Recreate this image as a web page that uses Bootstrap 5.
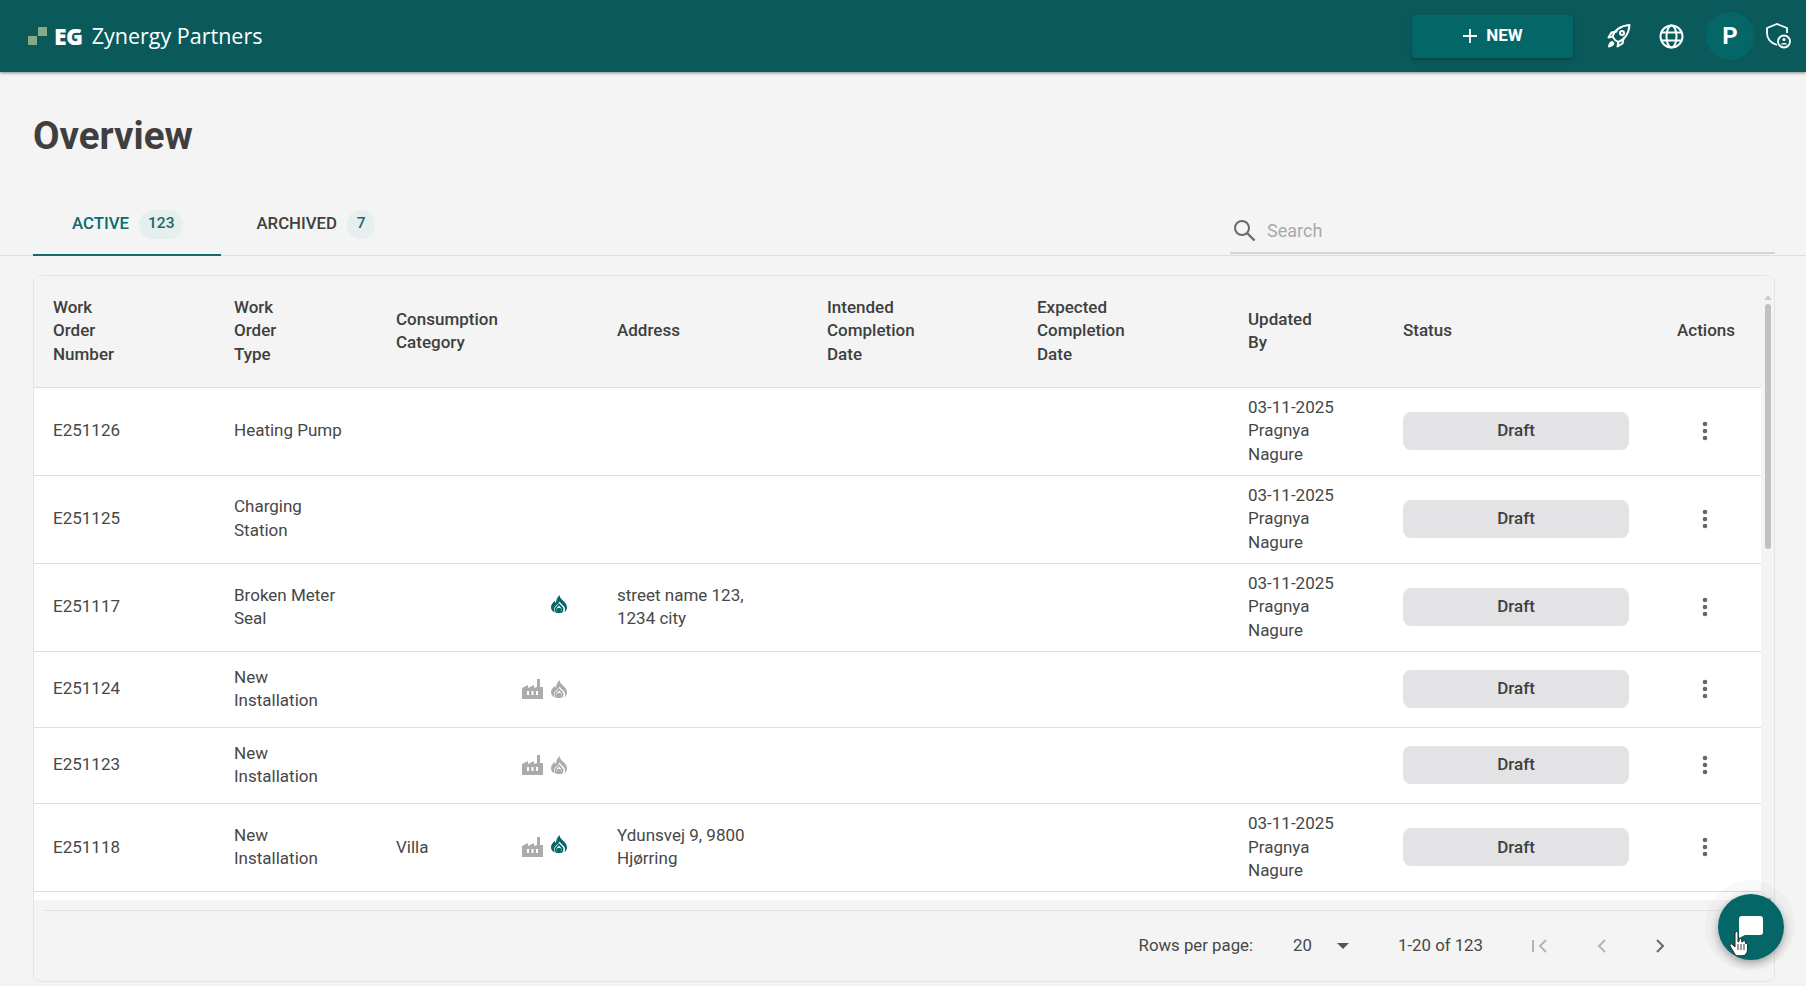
<!DOCTYPE html>
<html lang="en">
<head>
<meta charset="UTF-8">
<title>Overview</title>
<link rel="stylesheet" href="https://cdn.jsdelivr.net/npm/bootstrap@5.3.0/dist/css/bootstrap.min.css">
<style>
    html, body { height: 986px; overflow: hidden; }
    body { background: #f4f4f4; font-family: Roboto, "Liberation Sans", sans-serif; font-size: 17px; color: #474747; }
    .topbar { height: 72px; background: #0a5a5c; box-shadow: 0 1px 3px rgba(0,0,0,.45); padding: 0 15px 0 28px; position: relative; }
    .logo-mark { width: 19px; height: 18px; position: relative; margin-right: 7px; }
    .logo-mark i { position: absolute; display: block; width: 9px; height: 9px; }
    .logo-mark i:first-child { left: 0; bottom: 0; background: #86aa86; }
    .logo-mark i:last-child { right: 0; top: 0; background: #86aa86; }
    .logo-eg { font-family: "Open Sans", sans-serif; font-weight: 800; font-size: 23px; color: #fff; letter-spacing: -.5px; margin-right: 9px; line-height: 1; }
    .logo-name { font-family: "Open Sans", sans-serif; font-size: 21.5px; color: #fff; line-height: 1; }
    .new-btn { width: 161px; height: 43px; background: #056668; color: #fff; font-weight: 700; font-size: 17px; border: 0; border-radius: 4px; box-shadow: 0 2px 4px rgba(0,0,0,.25); margin-right: 20px; }
    .top-ico { width: 52px; color: #fff; }
    .avatar-dot { width: 48px; height: 48px; border-radius: 50%; background: #056668; color: #fff; font-size: 24px; font-weight: 700; margin: 0 11px 0 9px; }
    .page-title { font-size: 38.5px; font-weight: 700; color: #3f3f3f; margin: 0; padding: 41px 0 0 33px; line-height: 45px; height: 122px; }
    .tab-row { height: 62px; border-bottom: 1px solid #dedede; padding: 0 31px 0 33px; }
    .tab-item { height: 62px; font-size: 16.8px; font-weight: 500; color: #3f3f3f; border-bottom: 2px solid transparent; margin-bottom: -1px; }
    .tab-on { color: #0a6b6e; border-bottom-color: #12696b; padding: 0 38px 0 39px; }
    .tab-off { padding-left: 35px; }
    .tab-count { height: 29px; min-width: 28px; padding: 0 9px; border-radius: 15px; background: #e6eeee; color: #1c6a6c; font-size: 15.5px; margin-left: 10px; }
    .search-box { width: 545px; height: 45px; border-bottom: 2px solid #d5d5d5; margin-bottom: 1px; padding-left: 3px; }
    .search-box input { border: 0; background: transparent; outline: 0; font-size: 18px; width: 480px; margin-left: 9px; color: #474747; }
    .search-box input::placeholder { color: #a9a9a9; }
    .grid-card { margin: 19px 31px 0 33px; height: 707px; background: #f4f4f4; border: 1px solid #e5e5e5; border-radius: 8px; overflow: hidden; }
    .grid-scroll { height: 624px; }
    .grid-pane { width: 1727px; height: 624px; overflow: hidden; background: #fff; }
    .wo-table { table-layout: fixed; width: 1727px; margin: 0; color: #474747; }
    .wo-table th { background: #f4f4f4; height: 111px; font-weight: 500; color: #3f3f3f; padding: 0 0 0 19px; line-height: 23.7px; vertical-align: middle; border-bottom: 1px solid #dedede; }
    .wo-table td { padding: 8px 0 8px 19px; line-height: 23.7px; vertical-align: middle; border-bottom: 1px solid #dedede; box-shadow: none; }
    .wo-table tr.short-row td { height: 76px; }
    .wo-table tr.tall-row td { height: 87px; }
    .ico-cell { padding-right: 31px !important; }
    .flame-on { margin-bottom: 6px; }
    .draft-pill { width: 226px; height: 38px; border-radius: 8px; background: #e3e3e5; color: #3f3f3f; font-weight: 500; }
    .kebab { width: 56px; }
    .sb-track { width: 13px; height: 624px; background: #f4f4f4; }
    .sb-thumb { width: 6px; height: 245px; border-radius: 3px; background: #c1c1c1; margin: 4px auto 0; }
    .sb-arrow { width: 0; height: 0; margin: 19px auto 0; border-left: 4px solid transparent; border-right: 4px solid transparent; border-bottom: 5px solid #cdcdcd; }
    .sb-arrow.down { margin-top: 349px; border-bottom: 0; border-top: 5px solid #bdbdbd; }
    .pager { margin: 10px 0 0 9px; height: 71px; border-top: 1px solid #e3e3e3; padding-right: 109px; font-size: 16.8px; color: #474747; }
    .rows-val { margin-left: 40px; width: 32px; }
    .rows-caret { width: 0; height: 0; border-left: 6px solid transparent; border-right: 6px solid transparent; border-top: 6px solid #555; margin: 0 49px 0 12px; }
    .page-ico { margin-left: 35px; }
    .chat-halo { position: absolute; left: 1705px; top: 880px; width: 90px; height: 90px; border-radius: 50%; background: rgba(0,0,0,.025); }
    .chat-fab { position: absolute; left: 1718px; top: 894px; width: 66px; height: 66px; border: 0; border-radius: 50%; background: #056668; box-shadow: 0 3px 8px rgba(0,0,0,.35); }
    .hand-cursor { position: absolute; left: 1729px; top: 931px; }
</style>
</head>
<body>
<header class="topbar d-flex align-items-center">
    <div class="logo-mark"><i></i><i></i></div>
    <span class="logo-eg">EG</span>
    <span class="logo-name">Zynergy Partners</span>
    <div class="ms-auto d-flex align-items-center">
        <button class="new-btn d-flex align-items-center justify-content-center" type="button">
            <svg width="16" height="16" viewBox="0 0 16 16" class="me-2"><path d="M8 1v14M1 8h14" stroke="#fff" stroke-width="1.8"/></svg>NEW
        </button>
        <div class="top-ico d-flex justify-content-center">
            <svg width="26" height="26" viewBox="0 0 26 26" fill="none" stroke="#fff" stroke-width="2" stroke-linejoin="round" stroke-linecap="round"><path d="M9 17 6.5 13.5c2-6 8-11 17-11.5-.5 9-5.500 15-11.500 17z"/><path d="M7 13.500l-4.500 1 3-5 5-1"/><path d="M12.500 19l-1 4.500 5-3 1-5"/><circle cx="16" cy="10" r="2"/><path d="M6 19c-1.500.5-2.500 2-3 4.500 2.500-.5 4-1.500 4.500-3z" fill="#fff"/></svg>
        </div>
        <div class="top-ico d-flex justify-content-center">
            <svg width="25" height="25" viewBox="0 0 25 25" fill="none" stroke="#fff" stroke-width="2"><circle cx="12.500" cy="12.500" r="11"/><ellipse cx="12.500" cy="12.500" rx="5" ry="11"/><path d="M2.500 8.500h20M2.500 16.500h20"/></svg>
        </div>
        <div class="avatar-dot d-flex align-items-center justify-content-center">P</div>
        <svg width="26" height="26" viewBox="0 0 26 26" fill="none" stroke="#fff" stroke-width="1.800"><path d="M12 22C6 20 2 15.500 2 10V5l10-4 10 4v5"/><circle cx="19" cy="18.500" r="6"/><circle cx="19" cy="16.500" r="1.600" fill="#fff" stroke="none"/><path d="M15.800 21.500c.8-2 5.600-2 6.400 0z" fill="#fff" stroke="none"/></svg>
    </div>
</header>

<h1 class="page-title">Overview</h1>

<div class="tab-row d-flex align-items-end justify-content-between">
    <div class="d-flex">
        <div class="tab-item tab-on d-flex align-items-center">ACTIVE<span class="tab-count d-flex align-items-center justify-content-center">123</span></div>
        <div class="tab-item tab-off d-flex align-items-center">ARCHIVED<span class="tab-count d-flex align-items-center justify-content-center">7</span></div>
    </div>
    <div class="search-box d-flex align-items-center">
        <svg width="23" height="23" viewBox="0 0 23 23" fill="none" stroke="#6a6a6a" stroke-width="2"><circle cx="9" cy="9" r="7"/><path d="m14 14 7.500 7.500" stroke-width="2.400"/></svg>
        <input type="text" placeholder="Search">
    </div>
</div>

<div class="grid-card">
    <div class="grid-scroll d-flex">
        <div class="grid-pane">
            <table class="wo-table" id="woTable">
                <colgroup><col style="width:181px"><col style="width:162px"><col style="width:221px"><col style="width:210px"><col style="width:210px"><col style="width:211px"><col style="width:155px"><col style="width:274px"><col style="width:103px"></colgroup>
                <thead>
                    <tr>
                        <th>Work<br>Order<br>Number</th>
                        <th>Work<br>Order<br>Type</th>
                        <th>Consumption<br>Category</th>
                        <th>Address</th>
                        <th>Intended<br>Completion<br>Date</th>
                        <th>Expected<br>Completion<br>Date</th>
                        <th>Updated<br>By</th>
                        <th>Status</th>
                        <th>Actions</th>
                    </tr>
                </thead>
                <tbody></tbody>
            </table>
        </div>
        <div class="sb-track">
            <div class="sb-arrow"></div>
            <div class="sb-thumb"></div>
            <div class="sb-arrow down"></div>
        </div>
    </div>
    <div class="pager d-flex align-items-center justify-content-end">
        <span>Rows per page:</span>
        <span class="rows-val">20</span>
        <span class="rows-caret"></span>
        <span>1-20 of 123</span>
        <svg class="page-ico ms-5" width="18" height="16" viewBox="0 0 18 16" fill="none" stroke="#b5b5b5" stroke-width="2"><path d="M2 2v12M15 2 9 8l6 6"/></svg>
        <svg class="page-ico ms-5" width="10" height="16" viewBox="0 0 10 16" fill="none" stroke="#b5b5b5" stroke-width="2"><path d="M8 2 2 8l6 6"/></svg>
        <svg class="page-ico ms-5" width="10" height="16" viewBox="0 0 10 16" fill="none" stroke="#666" stroke-width="2"><path d="m2 2 6 6-6 6"/></svg>
    </div>
</div>

<div class="chat-halo"></div>
<button class="chat-fab d-flex align-items-center justify-content-center" type="button">
    <svg width="24" height="22" viewBox="0 0 24 22"><path d="M3 0h18a3 3 0 0 1 3 3v13a3 3 0 0 1-3 3H6l-6 3V3a3 3 0 0 1 3-3z" fill="#fff"/></svg>
</button>
<svg class="hand-cursor" width="20" height="26" viewBox="0 0 20 26"><path d="M6 2a1.500 1.500 0 0 1 3 0v9l1-.5V9a1.400 1.400 0 0 1 2.800 0v2l1-.3a1.300 1.300 0 0 1 2.600.3v1.500l.6-.2c1-.1 1.500.5 1.500 1.500v5c0 3-2 6-5 6H9c-2 0-3-1-4-3L1 15c-.8-1.600 1-2.800 2.200-1.600L6 16z" fill="#fff" stroke="#222" stroke-width="1"/><path d="M9 13v6M12 13v6M15 13v6" stroke="#222" stroke-width=".9"/></svg>

<script>
    const flame = c => `<svg class="${c === '#056668' ? 'flame-on' : ''}" width="16" height="18" viewBox="0 0 16 18"><path d="M8.500 0c.5 3 2 4 4 6 2 2 3.500 4 3.500 6.500 0 2.300-1.300 4.300-3.200 5.200 1.300-1.200 1.700-3 1-5C13 10.500 10.500 9.500 8.500 6.500c-.6 2.300-3.500 3.600-5 6-1 1.800-.6 4 .8 5.300C1.500 16.800 0 14.800 0 12.300 0 9.500 2 7.500 3.500 6c.4 1 .9 1.500 1.500 1.800C5 5 6.500 2 8.500 0z" fill="${c}"/><path d="M8 8c1.500 2 4.500 3.500 4.500 6.500 0 1.500-.8 2.800-2 3.500H6c-1.700-.7-2.700-2-2.500-3.800C3.800 12 6.800 10.500 8 8z" fill="${c}"/><circle cx="8" cy="14.500" r="2.600" fill="#fff" opacity="0"/><path d="M8 10.500c1 1.200 2.500 2.300 2.500 3.900a2.500 2.500 0 0 1-5 0c0-1.600 1.500-2.700 2.500-3.900z" fill="#fff"/><circle cx="8" cy="15" r="2.300" fill="${c}"/></svg>`;
    const factory = `<svg width="21" height="20" viewBox="0 0 21 20" class="me-2"><path d="M15 0h3v8h3v12H0V9l6-3v3l6-3v3l3-1z" fill="#ababab"/><path d="M5 12h2v4H5zM9.500 12h2v4h-2zM14 12h2v4h-2z" fill="#fff"/></svg>`;
    const on = '#056668', off = '#ababab';
    const by = '03-11-2025<br>Pragnya<br>Nagure';
    const rows = [
        { no: 'E251126', type: 'Heating Pump', by: by },
        { no: 'E251125', type: 'Charging<br>Station', by: by },
        { no: 'E251117', type: 'Broken Meter<br>Seal', icons: flame(on), addr: 'street name 123,<br>1234 city', by: by },
        { no: 'E251124', type: 'New<br>Installation', icons: factory + flame(off) },
        { no: 'E251123', type: 'New<br>Installation', icons: factory + flame(off) },
        { no: 'E251118', type: 'New<br>Installation', cat: 'Villa', icons: factory + flame(on), addr: 'Ydunsvej 9, 9800<br>Hjørring', by: by }
    ];
    const kebab = '<div class="kebab d-flex justify-content-center"><svg width="6" height="20" viewBox="0 0 6 20" fill="#666"><circle cx="3" cy="3" r="2.300"/><circle cx="3" cy="10" r="2.300"/><circle cx="3" cy="17" r="2.300"/></svg></div>';
    document.querySelector('#woTable tbody').innerHTML = rows.map(r => `
        <tr class="${r.by ? 'tall-row' : 'short-row'}">
            <td>${r.no}</td>
            <td>${r.type}</td>
            <td class="ico-cell"><div class="d-flex align-items-center justify-content-between"><span>${r.cat || ''}</span><span class="d-flex align-items-center">${r.icons || ''}</span></div></td>
            <td>${r.addr || ''}</td>
            <td></td>
            <td></td>
            <td>${r.by || ''}</td>
            <td><div class="draft-pill d-flex align-items-center justify-content-center">Draft</div></td>
            <td>${kebab}</td>
        </tr>`).join('');
</script>
<script src="https://cdn.jsdelivr.net/npm/bootstrap@5.3.0/dist/js/bootstrap.bundle.min.js"></script>
</body>
</html>
